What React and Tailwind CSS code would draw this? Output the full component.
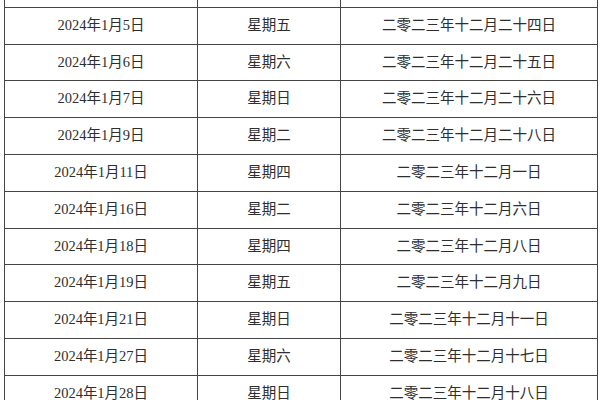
import React from 'react';

const rows = [
  ['2024年1月1日', '星期一', '二零二三年十一月二十日'],
  ['2024年1月5日', '星期五', '二零二三年十二月二十四日'],
  ['2024年1月6日', '星期六', '二零二三年十二月二十五日'],
  ['2024年1月7日', '星期日', '二零二三年十二月二十六日'],
  ['2024年1月9日', '星期二', '二零二三年十二月二十八日'],
  ['2024年1月11日', '星期四', '二零二三年十二月一日'],
  ['2024年1月16日', '星期二', '二零二三年十二月六日'],
  ['2024年1月18日', '星期四', '二零二三年十二月八日'],
  ['2024年1月19日', '星期五', '二零二三年十二月九日'],
  ['2024年1月21日', '星期日', '二零二三年十二月十一日'],
  ['2024年1月27日', '星期六', '二零二三年十二月十七日'],
  ['2024年1月28日', '星期日', '二零二三年十二月十八日'],
];

export default function App() {
  return (
    <div className="w-[600px] h-[400px] overflow-hidden bg-white pl-[4px]">
      <div
        className="w-[594px] mt-[-29px] border-l-[1.5px] border-r-[1.5px] border-[#444] text-[14.5px] text-[#2e2e2e]"
        style={{ fontFamily: '"Liberation Serif", "Noto Sans CJK SC", serif' }}
      >
        {rows.map((r, i) => (
          <div key={i} className="flex h-[36.8px] border-b-[1.5px] border-[#444]">
            <div className="w-[192px] flex items-center justify-center">{r[0]}</div>
            <div className="w-[143px] flex items-center justify-center border-l-[1.5px] border-[#444]">{r[1]}</div>
            <div className="flex-1 flex items-center justify-center border-l-[1.5px] border-[#444]">{r[2]}</div>
          </div>
        ))}
      </div>
    </div>
  );
}
